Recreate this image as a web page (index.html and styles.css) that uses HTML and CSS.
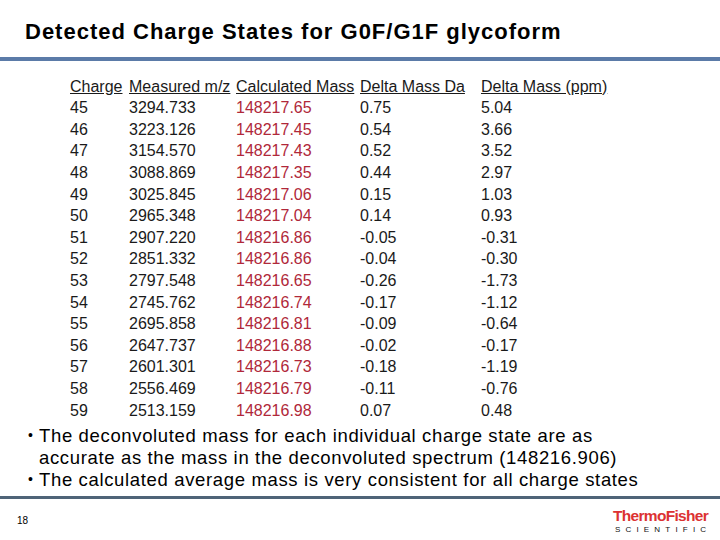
FILE: index.html
```html
<!DOCTYPE html>
<html>
<head>
<meta charset="utf-8">
<link rel="stylesheet" href="styles.css">
</head>
<body>
<div class="slide">
  <h1 class="title">Detected Charge States for G0F/G1F glycoform</h1>
  <div class="rule-top"></div>
  <div class="data">
    <span class="hd">Charge</span><span class="hd">Measured m/z</span><span class="hd">Calculated Mass</span><span class="hd">Delta Mass Da</span><span class="hd">Delta Mass (ppm)</span>
    <span>45</span><span>3294.733</span><span class="calc">148217.65</span><span>0.75</span><span>5.04</span>
    <span>46</span><span>3223.126</span><span class="calc">148217.45</span><span>0.54</span><span>3.66</span>
    <span>47</span><span>3154.570</span><span class="calc">148217.43</span><span>0.52</span><span>3.52</span>
    <span>48</span><span>3088.869</span><span class="calc">148217.35</span><span>0.44</span><span>2.97</span>
    <span>49</span><span>3025.845</span><span class="calc">148217.06</span><span>0.15</span><span>1.03</span>
    <span>50</span><span>2965.348</span><span class="calc">148217.04</span><span>0.14</span><span>0.93</span>
    <span>51</span><span>2907.220</span><span class="calc">148216.86</span><span>-0.05</span><span>-0.31</span>
    <span>52</span><span>2851.332</span><span class="calc">148216.86</span><span>-0.04</span><span>-0.30</span>
    <span>53</span><span>2797.548</span><span class="calc">148216.65</span><span>-0.26</span><span>-1.73</span>
    <span>54</span><span>2745.762</span><span class="calc">148216.74</span><span>-0.17</span><span>-1.12</span>
    <span>55</span><span>2695.858</span><span class="calc">148216.81</span><span>-0.09</span><span>-0.64</span>
    <span>56</span><span>2647.737</span><span class="calc">148216.88</span><span>-0.02</span><span>-0.17</span>
    <span>57</span><span>2601.301</span><span class="calc">148216.73</span><span>-0.18</span><span>-1.19</span>
    <span>58</span><span>2556.469</span><span class="calc">148216.79</span><span>-0.11</span><span>-0.76</span>
    <span>59</span><span>2513.159</span><span class="calc">148216.98</span><span>0.07</span><span>0.48</span>
  </div>
  <ul class="bullets">
    <li>The deconvoluted mass for each individual charge state are as accurate as the mass in the deconvoluted spectrum (148216.906)</li>
    <li>The calculated average mass is very consistent for all charge states</li>
  </ul>
  <div class="rule-bottom"></div>
  <footer class="footer">
    <span class="pagenum">18</span>
    <div class="logo">
      <div class="logo-main">ThermoFisher</div>
      <div class="logo-sub">SCIENTIFIC</div>
    </div>
  </footer>
</div>
</body>
</html>
```
FILE: styles.css
```css
* { box-sizing: border-box; }
html, body { margin: 0; padding: 0; background: #fff; }
body { font-family: "Liberation Sans", Arial, sans-serif; color: #000; }
.slide {
  width: 720px;
  height: 540px;
  display: flex;
  flex-direction: column;
  overflow: hidden;
}
.title {
  margin: 0;
  padding: 19px 0 0 25px;
  font-size: 22px;
  line-height: 26px;
  font-weight: bold;
  letter-spacing: 1px;
  height: 57px;
}
.rule-top {
  height: 4px;
  background: #5b7ba8;
}
.data {
  margin: 14.6px 0 0 70px;
  display: grid;
  grid-template-columns: 59px 107px 124px 121px auto;
  grid-auto-rows: 21.6px;
  font-size: 16px;
  line-height: 21.6px;
  color: #1a1a1a;
}
.data span { white-space: nowrap; }
.data .hd { text-decoration: underline; text-underline-offset: 1px; }
.data .calc { color: #b0283a; }
.bullets {
  list-style: none;
  margin: 4px 0 0 0;
  padding: 0 0 0 39px;
  font-size: 18.5px;
  line-height: 21.7px;
  letter-spacing: 0.65px;
  width: 660px;
}
.bullets li { position: relative; }
.bullets li::before {
  content: "\2022";
  position: absolute;
  left: -11px;
  top: 0;
  font-size: 14px;
}
.rule-bottom {
  margin-top: auto;
  height: 3px;
  background: #4f6478;
  margin-bottom: 0;
}
.footer {
  height: 41px;
  display: flex;
  justify-content: space-between;
  align-items: flex-start;
  padding: 9px 12px 0 17px;
}
.pagenum {
  font-size: 10px;
  line-height: 12px;
  margin-top: 7px;
}
.logo {
  display: flex;
  flex-direction: column;
  align-items: center;
}
.logo-main {
  color: #dc3232;
  font-weight: bold;
  font-size: 15.5px;
  line-height: 15px;
  letter-spacing: -0.7px;
}
.logo-sub {
  margin-top: 2px;
  font-size: 8px;
  line-height: 10px;
  letter-spacing: 5.2px;
  margin-right: -5.2px;
  color: #111;
}
```
